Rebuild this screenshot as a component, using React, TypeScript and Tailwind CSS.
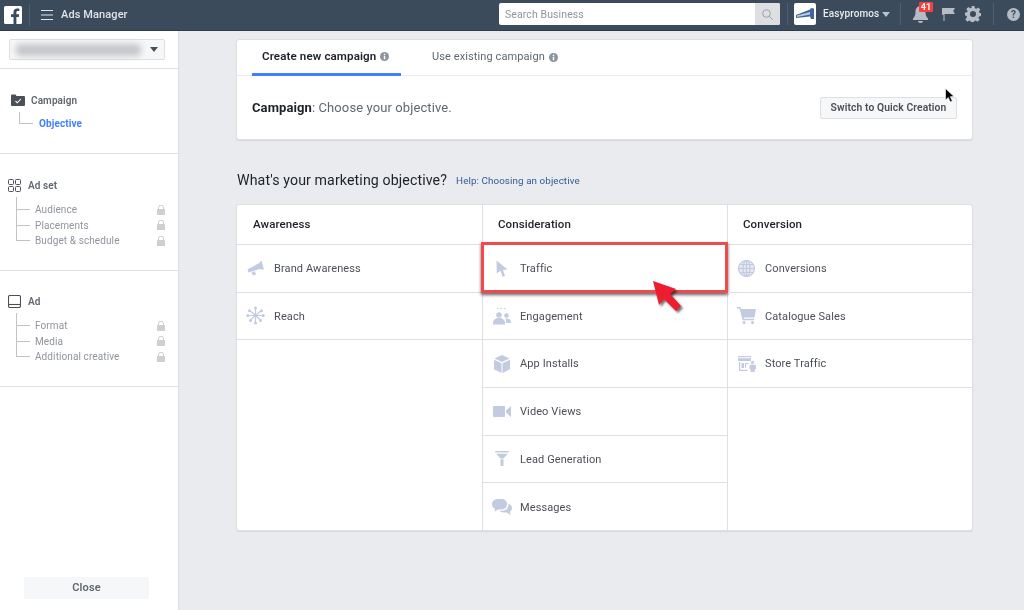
import React from "react";

const ic = "#c2cbdf";

function Logo() {
  return (
    <svg width="18" height="18" viewBox="0 0 18 18">
      <rect width="18" height="18" rx="1.5" fill="#fff" />
      <path d="M12.4 18v-7h2.4l.4-2.8h-2.8V6.5c0-.8.2-1.4 1.4-1.4h1.5V2.6c-.3 0-1.1-.1-2.2-.1-2.2 0-3.6 1.3-3.6 3.7v2H7v2.8h2.500v7z" fill="#3b4b5c" />
    </svg>
  );
}

function Caret({ color, w = 8 }: { color: string; w?: number }) {
  return (
    <svg width={w} height={w / 2 + 1} viewBox="0 0 8 5">
      <path d="M0 0h8L4 5z" fill={color} />
    </svg>
  );
}

function Lock() {
  return (
    <svg width="8" height="10" viewBox="0 0 8 10">
      <path d="M1.500 4V2.700a2.500 2.500 0 0 1 5 0V4" fill="none" stroke="#c9ccd1" strokeWidth="1" />
      <rect y="4" width="8" height="6" rx=".5" fill="#ccd0d5" />
    </svg>
  );
}

function Info() {
  return (
    <svg width="9" height="9" viewBox="0 0 10 10" className="ml-1 mb-[1px]">
      <circle cx="5" cy="5" r="5" fill="#8d949e" />
      <rect x="4.200" y="4.300" width="1.600" height="3.800" fill="#fff" />
      <rect x="4.200" y="1.900" width="1.600" height="1.600" fill="#fff" />
    </svg>
  );
}

function Megaphone() {
  return (
    <svg width="18" height="18" viewBox="0 0 18 18" fill={ic}>
      <path d="M.5 10.500 11.500 4.500 14.500 1.500 17 10.800 12.500 10 1.500 13.500z" />
      <path d="M4.500 13.200 8 12.200l.9 3.600-3 .8z" />
    </svg>
  );
}
function Reach() {
  return (
    <svg width="19" height="19" viewBox="0 0 19 19" stroke={ic} strokeWidth="1.200">
      <path d="M9.500 9.500 9.500 2.500M9.500 9.500 9.500 16.500M9.500 9.500 4 4.800M9.500 9.500 15 4.800M9.500 9.500 4 14.200M9.500 9.500 15 14.200M9.500 9.500H2M9.500 9.500H17" />
      <g fill={ic} stroke="none">
        <circle cx="9.500" cy="2" r="1.500" /><circle cx="9.500" cy="17" r="1.500" />
        <circle cx="3.500" cy="4.800" r="1.500" /><circle cx="15.500" cy="4.800" r="1.500" />
        <circle cx="1.800" cy="9.500" r="1.500" /><circle cx="17.200" cy="9.500" r="1.500" />
        <circle cx="4.500" cy="14.500" r="1.500" /><circle cx="14.500" cy="14.500" r="1.500" />
        <circle cx="9.500" cy="9.500" r="1.800" />
      </g>
    </svg>
  );
}
function Pointer() {
  return (
    <svg width="12" height="17" viewBox="0 0 12 17">
      <path d="M.500.500 11.500 9.500 7 10l2 6-2.500.8-2-6L.800 13.500z" fill={ic} />
    </svg>
  );
}
function People() {
  return (
    <svg width="18" height="18" viewBox="0 0 18 18" fill={ic}>
      <circle cx="6" cy="8" r="2.800" />
      <circle cx="13.500" cy="8.500" r="2.300" />
      <path d="M0 16c0-3.500 2.500-5 6-5s6 1.500 6 5v1.500H0z" />
      <path d="M12.800 11.500c3 0 5.200 1 5.200 3.600V16h-4.800c0-1.700-.2-3.200-1-4.400z" />
      <rect x="4" y="1" width="1.500" height="1" /><rect x="7.500" y="1" width="1.500" height="1" /><rect x="11" y="1" width="1.500" height="1" />
    </svg>
  );
}
function Cube() {
  return (
    <svg width="16" height="18" viewBox="0 0 16 18" fill={ic}>
      <path d="M8 0 15.500 3.500 8 7 .5 3.500z" />
      <path d="M0 4.700 7.500 8.200V18L0 14.300z" />
      <path d="M16 4.700 8.500 8.200V18l7.500-3.700z" />
    </svg>
  );
}
function Video() {
  return (
    <svg width="18" height="11" viewBox="0 0 18 11" fill={ic}>
      <rect width="12" height="11" rx=".8" />
      <path d="M13 4.500 18 0v11l-5-4.500z" />
    </svg>
  );
}
function Funnel() {
  return (
    <svg width="14" height="15" viewBox="0 0 14 15" fill={ic}>
      <path d="M0 0h14l-.6 1.600H.6z" />
      <path d="M1.200 2.800h11.600L8.500 7.500h-3z" />
      <rect x="5.500" y="8.300" width="3" height="6.700" />
    </svg>
  );
}
function Chat() {
  return (
    <svg width="20" height="17" viewBox="0 0 20 17" fill={ic}>
      <path d="M6.500 0h3C13 0 15 2 15 5s-2 5.500-5.500 5.500H6L2.500 12.800l.5-3C1 9 0 7.200 0 5.200 0 2 2.500 0 6.500 0z" />
      <path d="M16 4.500c2.500.8 4 2.500 4 4.500 0 1.700-.8 3-2 3.800l.4 3.500-3.400-2.800h-3C10 13.500 8.500 13 7.500 11.800H10c4 0 6.500-2.800 6.500-6.300z" />
    </svg>
  );
}
function Globe() {
  return (
    <svg width="17" height="17" viewBox="0 0 17 17" fill="none" stroke={ic} strokeWidth="1.100">
      <circle cx="8.500" cy="8.500" r="8" fill={ic} fillOpacity=".45" />
      <ellipse cx="8.500" cy="8.500" rx="3.500" ry="8" />
      <path d="M8.500.5v16M.5 8.500h16M1.700 4.500h13.600M1.700 12.500h13.600" />
    </svg>
  );
}
function Cart() {
  return (
    <svg width="19" height="17" viewBox="0 0 19 17" fill={ic}>
      <path d="M0 0h3.500l.9 2H19l-1.500 8.500H6.800l.3 1.300h10v1.500H5.700L2.500 1.600H0z" />
      <circle cx="7" cy="15.500" r="1.500" />
      <circle cx="15.500" cy="15.500" r="1.500" />
    </svg>
  );
}
function Store() {
  return (
    <svg width="18" height="16" viewBox="0 0 18 16" fill={ic}>
      <rect x="0" y="0" width="13" height="1.200" />
      <path d="M0 2.200h13V5H0z" />
      <path d="M1 6h1.200v7.800H1zM1 13.800h8.500v1.200H1zM3.500 7H6v5H3.500zM7 7h3.500v1.200H8v3.800H7z" />
      <circle cx="14.500" cy="6.500" r="1.700" />
      <path d="M12 8.800h5l1 .6V13h-1.200v3H12.500v-3h-1V9.500z" />
    </svg>
  );
}

function TreeList({ items }: { items: string[] }) {
  return (
    <div className="relative ml-[16px] mt-[10px]">
      <div className="absolute left-0 top-[-5px] w-px h-[44px] bg-[#bec2c9]" />
      {items.map((t) => (
        <div key={t} className="flex items-center h-[15.500px] relative">
          <div className="w-[14px] h-px bg-[#bec2c9]" />
          <span className="ml-[5px] text-[#90949c]">{t}</span>
          <span className="ml-auto mr-[13px] flex"><Lock /></span>
        </div>
      ))}
    </div>
  );
}

function Row({ icon, label, last, children }: { icon: React.ReactNode; label: string; last?: boolean; children?: React.ReactNode }) {
  return (
    <div className={`relative flex items-center h-[47.670px] ${last ? "" : "border-b border-[#dddfe2]"}`}>
      <div className="w-[37px] flex justify-center">{icon}</div>
      <span className="text-[11px] text-[#4b4f56] pt-[1.600px]">{label}</span>
      {children}
    </div>
  );
}

function Column({ title, className, pl, children }: { title: string; className: string; pl: string; children: React.ReactNode }) {
  return (
    <div className={className}>
      <div className={`h-[40px] border-b border-[#dddfe2] flex items-center ${pl} text-[11.500px] font-medium text-[#1d2129]`}>{title}</div>
      {children}
    </div>
  );
}

function Sep({ ml }: { ml: string }) {
  return <div className={`${ml} w-px h-[22px] bg-[#4f5f70] shrink-0`} />;
}

export default function App() {
  return (
    <div className="w-[1024px] h-[610px] overflow-hidden flex flex-col bg-[#e9ebee] text-[10px] tracking-[0.1px] blur-[0.4px]" style={{ fontFamily: "Roboto, 'Liberation Sans', sans-serif" }}>
      <header className="h-[31px] shrink-0 bg-[#3b4b5c] border-b border-[#2f3b48] flex items-center">
        <div className="ml-[4px] mb-[1px] flex"><Logo /></div>
        <Sep ml="ml-[7px]" />
        <svg className="ml-[11px]" width="12" height="10" viewBox="0 0 12 10" stroke="#e4e6ea" strokeWidth="1">
          <path d="M0 .5h12M0 5h12M0 9.500h12" />
        </svg>
        <span className="ml-[8px] whitespace-nowrap text-[11px] font-medium text-[#e1e4e8]">Ads Manager</span>

        <div className="ml-auto flex items-center pr-[4px] mb-[2px]">
          <div className="w-[281px] h-[22px] bg-white rounded-[2px] flex overflow-hidden">
            <span className="flex-1 pl-[6px] pt-[1px] text-[#90949c] text-[10.500px] leading-[22px]">Search Business</span>
            <span className="w-[25px] bg-[#dddfe2] flex items-center justify-center">
              <svg width="11" height="11" viewBox="0 0 11 11" fill="none" stroke="#9ba1aa" strokeWidth="1">
                <circle cx="4.500" cy="4.500" r="3.800" /><path d="M7.300 7.300 10.700 10.700" />
              </svg>
            </span>
          </div>
          <Sep ml="ml-[7px]" />
          <div className="ml-[6px] w-[22px] h-[22px] bg-white rounded-[2px] flex items-center justify-center shrink-0">
            <svg width="18" height="12" viewBox="0 0 18 12">
              <path d="M0 7 14 1.500 15 0l3 .5V11h-3l-1-2.500L0 10z" fill="#3f659c" />
              <path d="M1 7.500 14 4v2.500L1 9z" fill="#b8cbe3" />
            </svg>
          </div>
          <span className="ml-[7px] w-[53px] whitespace-nowrap text-[10px] font-medium text-[#e9ebee] mb-[2px]">Easypromos</span>
          <span className="ml-[6px] flex"><Caret color="#bcc3cc" /></span>
          <Sep ml="ml-[10px]" />
          <div className="relative ml-[12px] flex">
            <svg width="15" height="18" viewBox="0 0 15 18" fill="#b5bcc5">
              <path d="M7.500 1C4 1 2.500 4 2.500 7c0 3-.8 5-2.500 6.500V15h15v-1.500C13.300 12 12.500 10 12.500 7c0-3-1.500-6-5-6z" />
              <path d="M5 16h5c0 1.200-1 2-2.500 2S5 17.200 5 16z" />
            </svg>
            <span className="absolute left-[6px] top-[-3px] w-[14px] h-[10px] bg-[#fa3e3e] rounded-[1px] text-white text-[9px] font-bold leading-[10px] text-center tracking-normal">41</span>
          </div>
          <svg className="ml-[14px]" width="13" height="14" viewBox="0 0 13 14" fill="#b5bcc5">
            <path d="M0 1h13l-1.800 3L13 7H2.500v7H1.500V7.800H0z" />
          </svg>
          <svg className="ml-[10px]" width="16" height="16" viewBox="0 0 16 16" fill="#b5bcc5">
            <path fillRule="evenodd" d="M6.500 0h3l.4 2.200 1.400.6L13.200 1.500l2.100 2.100L14 5.500l.6 1.400 1.400.2v3l-2 .4-.6 1.400 1.300 1.800-2.100 2.100-1.900-1.300-1.400.6-.4 1.900h-3l-.3-2-1.400-.6-1.800 1.300-2.100-2.100 1.300-1.900L1.900 10 0 9.600v-3l2.100-.3.500-1.400-1.300-1.800 2.100-2.100 1.800 1.300 1.400-.6zM8 5a3 3 0 1 0 0 6 3 3 0 0 0 0-6z" />
          </svg>
          <Sep ml="ml-[12px]" />
          <svg className="ml-[13px]" width="13" height="13" viewBox="0 0 13 13">
            <circle cx="6.500" cy="6.500" r="6.500" fill="#b5bcc5" />
            <text x="6.500" y="10" textAnchor="middle" fontSize="10" fontWeight="700" fill="#3b4b5c" fontFamily="Roboto, sans-serif">?</text>
          </svg>
        </div>
      </header>

      <div className="flex flex-1 min-h-0">
        <aside className="w-[179px] shrink-0 bg-white border-r border-[#dddfe2] flex flex-col">
          <div className="h-[38px] shrink-0 border-b border-[#dddfe2] pt-[8px] pl-[9px]">
            <div className="w-[156px] h-[21px] border border-[#dddfe2] rounded-[2px] bg-[#f6f7f9] flex items-center pl-[6px]">
              <div className="w-[125px] h-[12px] bg-[#c4c6c9] blur-[3px] rounded-sm" />
              <span className="ml-[9px] flex"><Caret color="#4b4f56" /></span>
            </div>
          </div>

          <div className="h-[85px] shrink-0 border-b border-[#dddfe2] pt-[24px]">
            <div className="flex items-center h-[14px] pl-[11px]">
              <svg width="14" height="12" viewBox="0 0 14 12">
                <path d="M0 1.500A1 1 0 0 1 1 .500h3.500l1 1.500H13a1 1 0 0 1 1 1V11a1 1 0 0 1-1 1H1a1 1 0 0 1-1-1z" fill="#4b4f56" />
                <path d="M4.500 7 6.300 8.800 9.800 5" fill="none" stroke="#fff" strokeWidth="1.100" />
              </svg>
              <span className="ml-[6px] font-semibold text-[#616770]">Campaign</span>
            </div>
            <div className="ml-[19px] mt-[5px] flex items-end h-[12px]">
              <div className="w-[14px] h-[12px] border-l border-b border-[#bec2c9]" />
              <span className="ml-[6px] font-bold text-[#4080ff] leading-[12px] mb-[-6px]">Objective</span>
            </div>
          </div>

          <div className="h-[117px] shrink-0 border-b border-[#dddfe2] pt-[24px]">
            <div className="flex items-center h-[14px] pl-[8px]">
              <svg width="13" height="13" viewBox="0 0 13 13" fill="none" stroke="#4b4f56" strokeWidth="1">
                <rect x=".5" y=".5" width="5" height="5" rx="1" /><rect x="7.500" y=".5" width="5" height="5" rx="1" />
                <rect x=".5" y="7.500" width="5" height="5" rx="1" /><rect x="7.500" y="7.500" width="5" height="5" rx="1" />
              </svg>
              <span className="ml-[7px] font-semibold text-[#616770]">Ad set</span>
            </div>
            <TreeList items={["Audience", "Placements", "Budget & schedule"]} />
          </div>

          <div className="h-[116px] shrink-0 border-b border-[#dddfe2] pt-[23px]">
            <div className="flex items-center h-[14px] pl-[8px]">
              <svg width="13" height="13" viewBox="0 0 13 13" fill="none" stroke="#4b4f56" strokeWidth="1.100">
                <rect x=".5" y=".5" width="12" height="12" rx="1.500" /><path d="M1 9.500h11" />
              </svg>
              <span className="ml-[7px] font-semibold text-[#616770]">Ad</span>
            </div>
            <TreeList items={["Format", "Media", "Additional creative"]} />
          </div>

          <div className="mt-auto mb-[11px] ml-[24px] w-[125px] h-[22px] bg-[#f6f7f9] rounded-[2px] flex items-center justify-center font-semibold text-[#606770] text-[11px]">Close</div>
        </aside>

        <main className="flex-1 pl-[57px] pt-[8px]">
          <section className="relative w-[737px] h-[101px] bg-white border border-[#dddfe2] rounded-[3px] shadow-[0_1px_1px_rgba(0,0,0,0.08)]">
            <div className="h-[36px] border-b border-[#e9ebee] flex pl-[15px]">
              <div className="w-[149px] h-[36px] border-b-[3px] border-[#4080ff] flex items-center pl-[10px] text-[#1d2129] font-semibold text-[11.600px]">
                Create new campaign<Info />
              </div>
              <div className="ml-[31px] flex items-center text-[#606770] text-[11px]">
                Use existing campaign<Info />
              </div>
            </div>
            <div className="flex items-center pl-[15px] pr-[15px] h-[63px]">
              <span className="text-[13px] text-[#606770]"><b className="font-bold text-[#1d2129]">Campaign</b>: Choose your objective.</span>
              <button className="ml-auto w-[137px] h-[22px] bg-[#f6f7f9] border border-[#dddfe2] rounded-[2px] font-semibold text-[#4b4f56] text-[10.300px]">Switch to Quick Creation</button>
            </div>
            <svg className="absolute left-[708px] top-[48px]" width="10" height="15" viewBox="0 0 10 15">
              <path d="M.5.500v11.500l2.800-2.600 2 4.500 2-.9-2-4.300 3.700-.2z" fill="#000" stroke="#fff" strokeWidth=".6" />
            </svg>
          </section>

          <div className="mt-[30px] h-[22px] pl-[1px] flex items-center">
            <h1 className="text-[14.200px] text-[#1d2129] font-normal">What's your marketing objective?</h1>
            <a className="ml-[9px] text-[9.800px] text-[#365899]">Help: Choosing an objective</a>
          </div>

          <section className="mt-[12px] w-[737px] h-[327px] bg-white border border-[#dddfe2] rounded-[3px] flex shadow-[0_1px_1px_rgba(0,0,0,0.08)]">
            <Column title="Awareness" className="w-[245px]" pl="pl-[16px]">
              <Row icon={<Megaphone />} label="Brand Awareness" />
              <Row icon={<Reach />} label="Reach" />
            </Column>
            <Column title="Consideration" className="w-[245px] border-l border-[#dddfe2]" pl="pl-[15px]">
              <Row icon={<Pointer />} label="Traffic">
                <div className="absolute left-[-2px] right-[-1px] top-[-3px] bottom-[-1px] border-[3px] border-[#f04a4c] shadow-[0_2px_3px_rgba(0,0,0,0.6)]" />
                <svg className="absolute left-[170px] top-[36px] drop-shadow-[2px_2px_1px_rgba(0,0,0,0.55)]" width="30" height="32" viewBox="0 0 30 32">
                  <path d="M0 0 23 8 17 13 28 25 23 30 11 18 6 24z" fill="#ed1c2e" />
                </svg>
              </Row>
              <Row icon={<People />} label="Engagement" />
              <Row icon={<Cube />} label="App Installs" />
              <Row icon={<Video />} label="Video Views" />
              <Row icon={<Funnel />} label="Lead Generation" />
              <Row icon={<Chat />} label="Messages" last />
            </Column>
            <Column title="Conversion" className="flex-1 border-l border-[#dddfe2]" pl="pl-[15px]">
              <Row icon={<Globe />} label="Conversions" />
              <Row icon={<Cart />} label="Catalogue Sales" />
              <Row icon={<Store />} label="Store Traffic" />
            </Column>
          </section>
        </main>
      </div>
    </div>
  );
}
